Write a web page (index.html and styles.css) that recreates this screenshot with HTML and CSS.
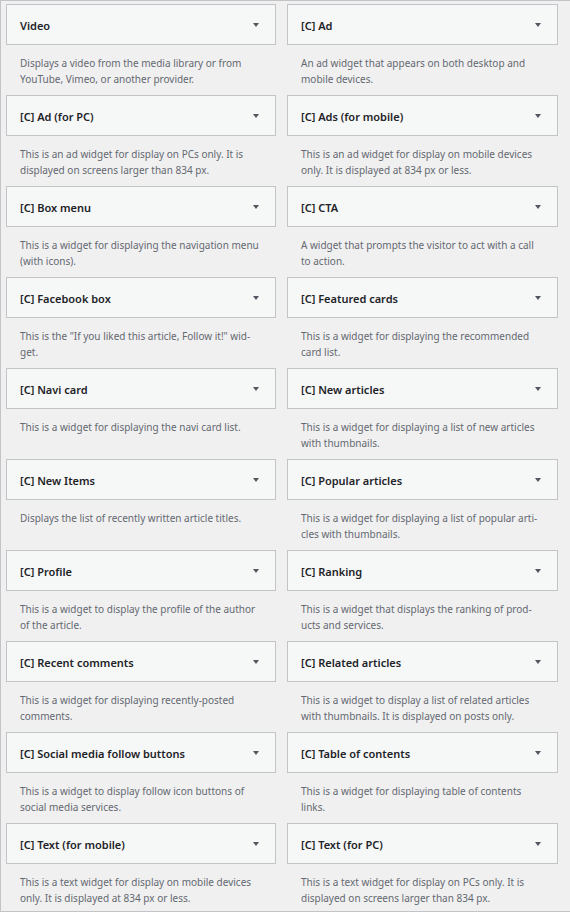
FILE: index.html
```html
<!DOCTYPE html>
<html lang="en">
  <head>
    <meta charset="UTF-8" />
    <meta name="viewport" content="width=device-width, initial-scale=1.0" />
    <title>Available widgets</title>
    <link rel="stylesheet" href="styles.css">
  </head>
  <body>
    <div class="widget-list">
      <div class="widget">
        <div class="widget-top"><h3>Video</h3><span class="arrow"></span></div>
        <p class="widget-desc">Displays a video from the media library or from YouTube, Vimeo, or another provider.</p>
      </div>
      <div class="widget">
        <div class="widget-top"><h3>[C] Ad</h3><span class="arrow"></span></div>
        <p class="widget-desc">An ad widget that appears on both desktop and mobile devices.</p>
      </div>
      <div class="widget">
        <div class="widget-top"><h3>[C] Ad (for PC)</h3><span class="arrow"></span></div>
        <p class="widget-desc">This is an ad widget for display on PCs only. It is displayed on screens larger than 834 px.</p>
      </div>
      <div class="widget">
        <div class="widget-top"><h3>[C] Ads (for mobile)</h3><span class="arrow"></span></div>
        <p class="widget-desc">This is an ad widget for display on mobile devices only. It is displayed at 834 px or less.</p>
      </div>
      <div class="widget">
        <div class="widget-top"><h3>[C] Box menu</h3><span class="arrow"></span></div>
        <p class="widget-desc">This is a widget for displaying the navigation menu (with icons).</p>
      </div>
      <div class="widget">
        <div class="widget-top"><h3>[C] CTA</h3><span class="arrow"></span></div>
        <p class="widget-desc">A widget that prompts the visitor to act with a call to action.</p>
      </div>
      <div class="widget">
        <div class="widget-top"><h3>[C] Facebook box</h3><span class="arrow"></span></div>
        <p class="widget-desc">This is the "If you liked this article, Follow it!" wid&shy;get.</p>
      </div>
      <div class="widget">
        <div class="widget-top"><h3>[C] Featured cards</h3><span class="arrow"></span></div>
        <p class="widget-desc">This is a widget for displaying the recommended card list.</p>
      </div>
      <div class="widget">
        <div class="widget-top"><h3>[C] Navi card</h3><span class="arrow"></span></div>
        <p class="widget-desc">This is a widget for displaying the navi card list.</p>
      </div>
      <div class="widget">
        <div class="widget-top"><h3>[C] New articles</h3><span class="arrow"></span></div>
        <p class="widget-desc">This is a widget for displaying a list of new articles with thumbnails.</p>
      </div>
      <div class="widget">
        <div class="widget-top"><h3>[C] New Items</h3><span class="arrow"></span></div>
        <p class="widget-desc">Displays the list of recently written article titles.</p>
      </div>
      <div class="widget">
        <div class="widget-top"><h3>[C] Popular articles</h3><span class="arrow"></span></div>
        <p class="widget-desc">This is a widget for displaying a list of popular arti&shy;cles with thumbnails.</p>
      </div>
      <div class="widget">
        <div class="widget-top"><h3>[C] Profile</h3><span class="arrow"></span></div>
        <p class="widget-desc">This is a widget to display the profile of the author of the article.</p>
      </div>
      <div class="widget">
        <div class="widget-top"><h3>[C] Ranking</h3><span class="arrow"></span></div>
        <p class="widget-desc">This is a widget that displays the ranking of prod&shy;ucts and services.</p>
      </div>
      <div class="widget">
        <div class="widget-top"><h3>[C] Recent comments</h3><span class="arrow"></span></div>
        <p class="widget-desc">This is a widget for displaying recently-posted comments.</p>
      </div>
      <div class="widget">
        <div class="widget-top"><h3>[C] Related articles</h3><span class="arrow"></span></div>
        <p class="widget-desc">This is a widget to display a list of related articles with thumbnails. It is displayed on posts only.</p>
      </div>
      <div class="widget">
        <div class="widget-top"><h3>[C] Social media follow buttons</h3><span class="arrow"></span></div>
        <p class="widget-desc">This is a widget to display follow icon buttons of social media services.</p>
      </div>
      <div class="widget">
        <div class="widget-top"><h3>[C] Table of contents</h3><span class="arrow"></span></div>
        <p class="widget-desc">This is a widget for displaying table of contents links.</p>
      </div>
      <div class="widget">
        <div class="widget-top"><h3>[C] Text (for mobile)</h3><span class="arrow"></span></div>
        <p class="widget-desc">This is a text widget for display on mobile devices only. It is displayed at 834 px or less.</p>
      </div>
      <div class="widget">
        <div class="widget-top"><h3>[C] Text (for PC)</h3><span class="arrow"></span></div>
        <p class="widget-desc">This is a text widget for display on PCs only. It is displayed on screens larger than 834 px.</p>
      </div>
    </div>
  </body>
</html>
```

FILE: styles.css
```css
body {
  margin: 0;
  background-color: #fff;
  font-family: "Noto Sans", sans-serif;
}
.widget-list {
  width: 557px;
  height: 902px;
  padding: 3px 10px 5px 5px;
  border: 1px solid #c3c4c7;
  background-color: #f0f0f1;
  display: grid;
  grid-template-columns: 270px 271px;
  grid-auto-rows: 91px;
  column-gap: 11px;
  align-content: start;
}
.widget-top {
  box-sizing: border-box;
  height: 41px;
  border: 1px solid #c3c4c7;
  background-color: #f6f7f7;
  display: flex;
  align-items: center;
  justify-content: space-between;
  padding: 2px 16px 0 13px;
}
.widget-top h3 {
  margin: 0;
  font-size: 11px;
  font-weight: 600;
  color: #1d2327;
}
.arrow {
  width: 0;
  height: 0;
  margin-top: -1px;
  border-left: 3px solid transparent;
  border-right: 3px solid transparent;
  border-top: 4px solid #50575e;
}
.widget-desc {
  margin: 0;
  padding: 10px 14px 0 14px;
  font-size: 10px;
  line-height: 16px;
  color: #646970;
}
```
